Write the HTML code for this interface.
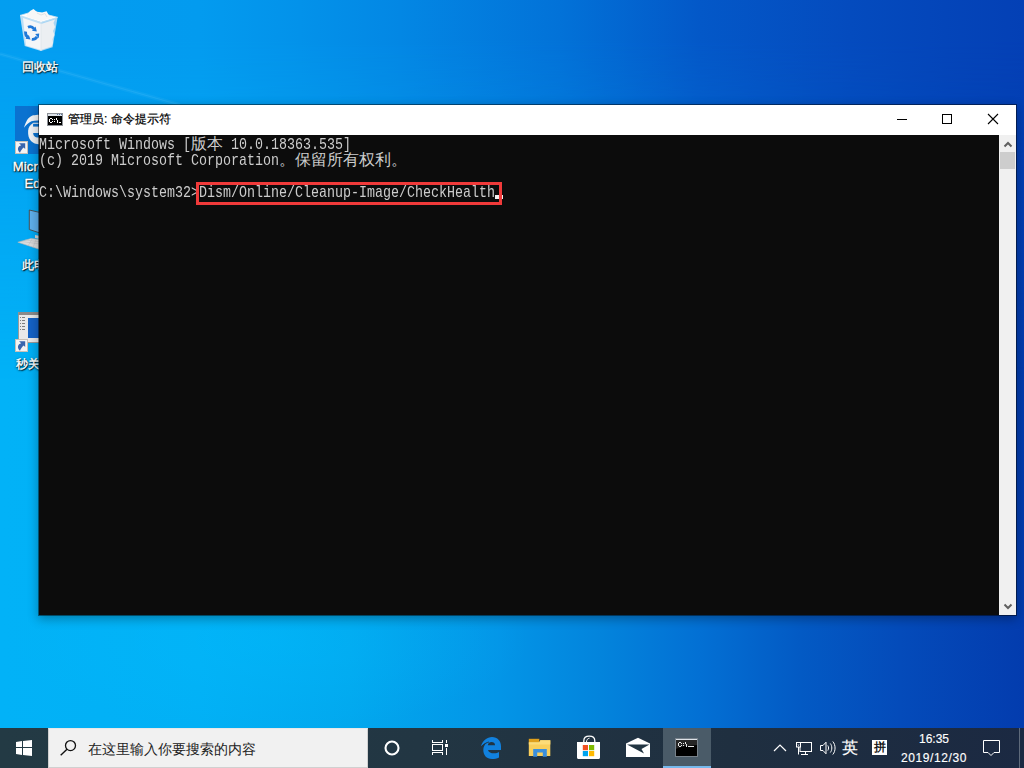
<!DOCTYPE html>
<html><head><meta charset="utf-8">
<style>
*{margin:0;padding:0;box-sizing:border-box}
html,body{width:1024px;height:768px;overflow:hidden}
body{position:relative;font-family:"Liberation Sans",sans-serif;background:#0a8fe2}
.abs{position:absolute}
svg{position:absolute;overflow:visible}
#wallB{left:0;top:0;width:1024px;height:768px;
 background:linear-gradient(90deg,#02b2f7 0px,#02b0f5 200px,#02a8ee 350px,#0395e7 500px,#0384dc 600px,#0370d4 700px,#035ac4 800px,#044bba 900px,#033cae 1024px);}
#wallT{left:0;top:0;width:1024px;height:768px;
 background:linear-gradient(90deg,#039ef0 0px,#039cf0 100px,#039bef 200px,#0392ea 300px,#0387e4 400px,#0272d8 560px,#0358c8 700px,#044bbe 850px,#0440b5 1024px);
 -webkit-mask-image:linear-gradient(180deg,#000 0px,#000 40px,rgba(0,0,0,0) 380px);}
.lbl{position:absolute;color:#fff;-webkit-text-stroke:.35px #fff;font-size:12px;line-height:16px;text-align:center;width:80px;left:0;
 text-shadow:1px 1px 1px rgba(0,0,0,.95),0 1px 2px rgba(0,0,0,.7),0 0 2px rgba(0,0,0,.5)}
#win{left:38px;top:104px;width:979px;height:512px;background:#fff;background-clip:padding-box;border:1px solid rgba(0,0,0,.45);box-shadow:0 3px 10px rgba(0,0,0,.3)}
#title{left:0;top:0;width:977px;height:30px;background:#fff}
#ttxt{left:29px;top:7px;font-size:12px;line-height:14px;color:#000;white-space:pre;-webkit-text-stroke:.2px #000}
#con{left:0;top:30px;width:960px;height:480px;background:#0c0c0c;overflow:hidden}
#sb{left:960px;top:30px;width:17px;height:480px;background:#f0f0f0}
.ln{position:absolute;left:0;margin-top:1px;height:16px;white-space:pre;color:#cccccc;line-height:16px}
.a{display:inline-block;height:16px;overflow:visible;vertical-align:top}
.a>i{display:inline-block;font-style:normal;font-family:"Liberation Mono",monospace;font-size:17px;line-height:16px;transform-origin:0 0;transform:scaleX(0.7843)}
.c{display:inline-block;height:16px;vertical-align:top;font-family:"Liberation Serif",serif;font-size:16px;line-height:16px;letter-spacing:0}
#task{left:0;top:728px;width:1024px;height:40px;background:linear-gradient(90deg,#233a44 0px,#223643 420px,#1f2f40 733px,#1b2942 1024px)}
#search{left:48px;top:0;width:320px;height:40px;background:#f1f1f1;border:1px solid #d0d0d0;border-top-color:#e8e8e8}
#stxt{left:39px;top:12px;font-size:14px;line-height:16px;color:#222;white-space:pre}
#act{left:663px;top:0;width:48px;height:40px;background:#4a5b68}
#actbar{left:663px;top:38px;width:48px;height:2px;background:#76b9ed}
.tray{position:absolute;color:#fff;white-space:pre;-webkit-text-stroke:.15px #fff}
</style></head><body>
<div id="wallB" class="abs"></div>
<div id="wallT" class="abs"></div>
<div class="abs" style="left:0;top:0;width:1024px;height:768px;background:radial-gradient(ellipse 260px 90px at 270px 640px,rgba(0,190,255,.35),rgba(0,190,255,0))"></div>

<svg style="left:0;top:0" width="300" height="110" viewBox="0 0 300 110"><path d="M0 54 L180 105" stroke="rgba(160,230,255,.07)" stroke-width="4"/><path d="M0 54 L180 105" stroke="rgba(170,235,255,.1)" stroke-width="1.2"/></svg>
<!-- desktop icons -->
<svg style="left:0;top:0" width="80" height="60" viewBox="0 0 80 60">
 <path d="M20 15.4 L41 22.3 L41 51 L24.7 46 Z" fill="#cfe6f6" opacity=".9"/>
 <path d="M41 22.3 L57.6 17.3 L52.6 47.3 L41 51 Z" fill="#b9dcf4" opacity=".9"/>
 <path d="M23 18 L41 24 L41 50 L26 45.5 Z" fill="#f4f6f8"/>
 <path d="M41 24 L55 19.5 L53.5 23 L55 27 L53 31 L54.5 35 L52.5 39 L53 43 L51.5 46.5 L41 50 Z" fill="#eceff2"/>
 <path d="M20 15.4 L34 11.3 L57.6 17.3 L41 22.3 Z" fill="#ffffff" stroke="#cfe3f2" stroke-width=".8"/>
 <path d="M26 16 L30 11 L33.5 9 L37 12 L42 12.5 L46.6 11.3 L49 15.5 L53 17.5 L41 21 L30 18 Z" fill="#f7f7f7"/>
 <path d="M37 13 L41 15 L45 13.5 L47 17" stroke="#dfe3e6" stroke-width="1" fill="none"/>
 <path d="M41 22.3 L41 51" stroke="#e0e6ea" stroke-width=".8"/>
 <g stroke="#1f78d8" stroke-width="2.8" stroke-linecap="butt" fill="none">
  <path d="M28 27.2 C30.5 26 32.5 26.8 34 28.8"/>
  <path d="M25.6 31.5 C25.2 34 26 36 27.8 37.5"/>
  <path d="M31.8 39.3 C34 39.6 35.8 38.8 37 36.8"/>
 </g>
 <g fill="#1f78d8"><path d="M32 30.8 L36.8 31.5 L35.6 26.6 Z"/><path d="M25.5 38.8 L30.5 39.5 L28.8 35 Z"/><path d="M35.2 34 L38.8 38.2 L39.2 33.6 Z"/></g>
</svg>
<div class="lbl" style="top:59px">回收站</div>

<div class="abs" style="left:15px;top:106px;width:30px;height:48px;background:#0a72d0"></div>
<svg style="left:15px;top:106px" width="30" height="48" viewBox="0 0 30 48">
 <path d="M9.1 21.7 C10.5 16 13 11.5 16.5 10 C19 9 21.5 8.8 30 8.8 L30 14.3 C25 14.3 20 14.5 16.5 15.3 C13.5 16.5 11 19 9.1 21.7 Z" fill="#f0f4f8"/>
 <path d="M18.4 16.8 C15 19 13.2 21.5 13.1 25 C13 29 13.5 32 16 35 C18.5 37.5 21 38.6 30 38.6 L30 16.8 Z" fill="#eef2f6"/>
 <path d="M18.1 17.8 L30 17.8 L30 20.6 L18.1 20.6 Z" fill="#0a72d0"/>
 <path d="M30 27.1 L18.1 27.1 C18.3 29.5 19.5 31.5 22 31.5 L30 31.5 Z" fill="#0a72d0"/>
</svg>
<div class="abs" style="left:15px;top:141px;width:13px;height:13px;background:#f4f4f4;border:1px solid #c8c0b8"></div>
<svg style="left:15px;top:141px" width="13" height="13" viewBox="0 0 13 13"><path d="M4 2.2 L10.2 2.2 L10.2 8 L8.6 6.6 C7.2 7.8 6 9.5 5 11.8 C3.4 10.4 2.7 8.8 3 7.2 C3.3 5.6 4.6 4.6 6.2 4.2 Z" fill="#3a66ae"/></svg>
<div class="lbl" style="top:158px;font-size:13px;line-height:17px;letter-spacing:.2px">Microsoft<br>Edge</div>

<svg style="left:0;top:200px" width="40" height="55" viewBox="0 0 40 55">
 <path d="M29.3 10 L40 12.5 L40 33 L29.3 29.5 Z" fill="#5fb0ec" stroke="#4a4a4a" stroke-width="0.9"/>
 <path d="M35 35 L40 36 L40 39 L35 38 Z" fill="#cfd4d8"/>
 <path d="M17.8 42.2 L31 38.5 L40 39.5 L40 49.5 Z" fill="#dcdcdc" stroke="#b0b4b8" stroke-width=".6"/>
 <g stroke="#b8bcc0" stroke-width=".5"><path d="M21 41.5 L40 44"/><path d="M25 40 L40 41.8"/><path d="M28 46 L32 39"/><path d="M33 47.5 L36 39.5"/></g>
</svg>
<div class="lbl" style="top:257px">此电脑</div>

<svg style="left:0;top:310px" width="40" height="45" viewBox="0 0 40 45">
 <rect x="18.5" y="2.5" width="22" height="30" fill="#e9e9e9" stroke="#9a9a9a"/>
 <rect x="18.5" y="2" width="22" height="3" fill="#8a8a8a"/>
 <rect x="28" y="8" width="12" height="20" fill="#1462c6"/>
 <g fill="#808080"><rect x="20" y="7" width="1" height="1"/><rect x="22" y="7" width="3" height="1"/><rect x="20" y="10" width="1" height="1"/><rect x="22" y="10" width="3" height="1"/><rect x="20" y="13" width="1" height="1"/><rect x="22" y="13" width="3" height="1"/><rect x="20" y="16" width="1" height="1"/><rect x="22" y="16" width="3" height="1"/><rect x="20" y="19" width="1" height="1"/><rect x="22" y="19" width="3" height="1"/></g>
</svg>
<div class="abs" style="left:15px;top:339px;width:13px;height:13px;background:#f4f4f4;border:1px solid #c8c0b8"></div>
<svg style="left:15px;top:339px" width="13" height="13" viewBox="0 0 13 13"><path d="M4 2.2 L10.2 2.2 L10.2 8 L8.6 6.6 C7.2 7.8 6 9.5 5 11.8 C3.4 10.4 2.7 8.8 3 7.2 C3.3 5.6 4.6 4.6 6.2 4.2 Z" fill="#3a66ae"/></svg>
<div class="lbl" style="top:356px">秒关程序</div>

<!-- cmd window -->
<div id="win" class="abs">
 <div id="title" class="abs">
  <svg style="left:8px;top:8px" width="16" height="13" viewBox="0 0 16 13" shape-rendering="crispEdges">
   <rect x="0" y="0" width="16" height="13" fill="#8e9298"/>
   <rect x="1" y="1" width="14" height="2" fill="#dde2e8"/>
   <rect x="10" y="1" width="1" height="1" fill="#5a76a0"/><rect x="12" y="1" width="1" height="1" fill="#5a76a0"/><rect x="14" y="1" width="1" height="1" fill="#5a76a0"/>
   <rect x="1" y="3" width="14" height="9" fill="#000"/>
   <g fill="#fff"><rect x="3" y="5" width="2" height="1"/><rect x="2" y="6" width="1" height="3"/><rect x="3" y="9" width="2" height="1"/><rect x="5" y="6" width="1" height="1"/><rect x="5" y="8" width="1" height="1"/>
   <rect x="7" y="6" width="1" height="1"/><rect x="7" y="8" width="1" height="1"/>
   <rect x="9" y="5" width="1" height="2"/><rect x="10" y="7" width="1" height="3"/>
   <rect x="12" y="9" width="2" height="1"/></g>
  </svg>
  <div id="ttxt" class="abs">管理员: 命令提示符</div>
  <div class="abs" style="left:858px;top:14px;width:10px;height:1px;background:#000"></div>
  <div class="abs" style="left:903px;top:9px;width:10px;height:10px;border:1px solid #000"></div>
  <svg style="left:949px;top:9px" width="10" height="10" viewBox="0 0 10 10"><path d="M0 0 L10 10 M10 0 L0 10" stroke="#000" stroke-width="1.1"/></svg>
 </div>
 <div id="con" class="abs">
  <div class="ln" style="top:0"><span class="a" style="width:152px"><i>Microsoft Windows [</i></span><span class="c" style="width:32px">版本</span><span class="a" style="width:128px"><i> 10.0.18363.535]</i></span></div>
  <div class="ln" style="top:16px"><span class="a" style="width:240px"><i>(c) 2019 Microsoft Corporation</i></span><span class="c" style="width:128px">。保留所有权利。</span></div>
  <div class="ln" style="top:48px"><span class="a" style="width:456px"><i>C:\Windows\system32&gt;Dism/Online/Cleanup-Image/CheckHealth</i></span></div>
  <div class="abs" style="left:456px;top:60px;width:8px;height:4px;background:#f0f0f0"></div>
  <div class="abs" style="left:157px;top:47px;width:306px;height:23px;border:3px solid #f03a3a"></div>
 </div>
 <div id="sb" class="abs">
  <svg style="left:5px;top:6px" width="8" height="6" viewBox="0 0 8 6"><path d="M0.5 5.5 L4 2 L7.5 5.5" stroke="#606060" stroke-width="2" fill="none"/></svg>
  <div class="abs" style="left:1px;top:17px;width:15px;height:17px;background:#cdcdcd"></div>
  <svg style="left:5px;top:469px" width="8" height="6" viewBox="0 0 8 6"><path d="M0.5 0.5 L4 4 L7.5 0.5" stroke="#606060" stroke-width="2" fill="none"/></svg>
 </div>
</div>

<!-- taskbar -->
<div id="task" class="abs">
 <svg style="left:16px;top:12px" width="16" height="16" viewBox="0 0 16 16">
  <path d="M0 1.9 L6 1 L6 7 L0 7 Z M7 0.9 L16 -0.1 L16 7 L7 7 Z M0 8 L6 8 L6 15 L0 14.1 Z M7 8 L16 8 L16 16.1 L7 15.1 Z" fill="#fff"/>
 </svg>
 <div id="search" class="abs">
  <svg style="left:11px;top:11px" width="17" height="17" viewBox="0 0 17 17"><circle cx="10.5" cy="5.6" r="5" stroke="#111" stroke-width="1.3" fill="none"/><path d="M7 9.2 L0.7 15.2" stroke="#111" stroke-width="1.4"/></svg>
  <div id="stxt" class="abs">在这里输入你要搜索的内容</div>
 </div>
 <svg style="left:384px;top:12px" width="16" height="16" viewBox="0 0 16 16"><circle cx="8" cy="8" r="6.5" stroke="#fff" stroke-width="2.1" fill="none"/></svg>
 <svg style="left:428px;top:8px" width="24" height="24" viewBox="0 0 24 24" shape-rendering="crispEdges">
  <g fill="#fff">
   <rect x="4" y="4" width="1" height="3"/><rect x="14" y="4" width="1" height="3"/><rect x="4" y="6" width="11" height="1"/>
   <rect x="4" y="8" width="11" height="1"/><rect x="4" y="14" width="11" height="1"/><rect x="4" y="8" width="1" height="7"/><rect x="14" y="8" width="1" height="7"/>
   <rect x="4" y="16" width="11" height="1"/><rect x="4" y="16" width="1" height="3"/><rect x="14" y="16" width="1" height="3"/>
   <rect x="18" y="4" width="1" height="3"/><rect x="17" y="8" width="3" height="3"/><rect x="18" y="12" width="1" height="7"/>
  </g>
 </svg>
 <svg style="left:476px;top:4px" width="32" height="32" viewBox="0 0 32 32">
  <path fill-rule="evenodd" d="M4.8 14.2 C7 8.5 11 5 16 5 C21.5 5 25 9 25 14 L25 18 L12 18 C12.5 20.5 15 21.3 18 21.3 C20 21.3 22 20.8 23 20 L23 25.5 C21 26.5 18.5 27 16 27 C10.5 27 7.3 23 7.3 18 C7.3 15 8.5 12.5 11 10.5 C8.5 11.5 6.5 13 4.8 14.2 Z M11.8 13.3 L19 13.3 C19 11 17.5 10 15.5 10 C13.5 10 12.3 11 11.8 13.3 Z" fill="#1181de"/>
  <path d="M6 14 C8 12 10.5 10.5 13 10" stroke="#223542" stroke-width="0.9" fill="none"/>
 </svg>
 <svg style="left:520px;top:2px" width="90" height="36" viewBox="0 0 90 36">
  <rect x="8.8" y="8.8" width="10.5" height="3.5" fill="#e0a01c"/>
  <path d="M8.8 12.2 H19.2 L20.4 10.2 H30.3 V26 H8.8 Z" fill="#f9cf5c"/>
  <path d="M8.8 12.2 H19.2 L20.4 10.2 H30.3 V14.5 H8.8 Z" fill="#fddc78"/>
  <path d="M13.2 26.8 V18.9 H26.8 V26.8 H22.8 V22.4 H17.2 V26.8 Z" fill="#3b8fdc"/>
  <path d="M63.8 12.5 V11 C63.8 8 66 6.2 69.3 6.2 C72.6 6.2 74.8 8 74.8 11 V12.5" stroke="#fff" stroke-width="1.3" fill="none"/>
  <path d="M66.5 12 C66.5 10 67.5 8.5 69.5 8.2" stroke="#fff" stroke-width="1" fill="none"/>
  <path d="M57 11.9 H80 V27.5 C80 28.4 79.4 29 78.5 29 H58.5 C57.6 29 57 28.4 57 27.5 Z" fill="#fff"/>
  <rect x="62.8" y="15" width="5.2" height="5.2" fill="#f25022"/><rect x="69" y="15" width="5.2" height="5.2" fill="#7fba00"/>
  <rect x="62.8" y="21" width="5.2" height="5.2" fill="#00a4ef"/><rect x="69" y="21" width="5.2" height="5.2" fill="#ffb900"/>
 </svg>
 <svg style="left:615px;top:0px" width="40" height="40" viewBox="0 0 40 40">
  <path d="M11 15.6 L23 9.8 L35 15.6 L35 29 L11 29 Z" fill="#fff"/>
  <path d="M12 16.5 L34.5 16.5 L26.5 21 L29 25.5 Z" fill="#223542"/>
 </svg>
 <div id="act" class="abs"></div>
 <div id="actbar" class="abs"></div>
 <svg style="left:675px;top:10px" width="23" height="19" viewBox="0 0 23 19" shape-rendering="crispEdges">
  <rect x="0" y="0" width="23" height="19" fill="#77818a"/>
  <rect x="1" y="1" width="21" height="1" fill="#dfe3e8"/>
  <rect x="1" y="2" width="21" height="16" fill="#000"/>
  <path d="M1 2 H22 V7 C15 7.5 6 8 1 11 Z" fill="#262626" shape-rendering="auto"/>
  <g fill="#e6e6e6"><rect x="4" y="4" width="2" height="1"/><rect x="3" y="5" width="1" height="3"/><rect x="4" y="8" width="2" height="1"/><rect x="6" y="5" width="1" height="1"/><rect x="6" y="7" width="1" height="1"/>
  <rect x="8" y="5" width="1" height="1"/><rect x="8" y="7" width="1" height="1"/>
  <rect x="10" y="4" width="1" height="2"/><rect x="11" y="6" width="1" height="3"/>
  <rect x="13" y="8" width="6" height="1"/></g>
 </svg>
 <svg style="left:773px;top:16px" width="14" height="8" viewBox="0 0 14 8"><path d="M1 7 L7 1 L13 7" stroke="#fff" stroke-width="1.2" fill="none"/></svg>
 <svg style="left:790px;top:8px" width="50" height="24" viewBox="0 0 50 24">
  <g stroke="#fff" stroke-width="1" fill="none">
   <rect x="10" y="6.5" width="11.5" height="9"/>
   <rect x="6.5" y="6.5" width="4" height="4.5" fill="#1e2d42"/>
   <path d="M8.5 11 V18.5 M15.5 15.5 V18 M11 18.5 H18"/>
   <path d="M8 8.5 L8.5 9.5 L9 8.5" stroke-width=".8"/>
   <path d="M30.5 9.5 H33 L36 6.2 V17.8 L33 14.5 H30.5 Z"/>
   <path d="M37.8 9.5 C38.8 11 38.8 13 37.8 14.5"/>
   <path d="M40.3 7.5 C42.3 10 42.3 14 40.3 16.5"/>
   <path d="M42.8 5.5 C45.8 9 45.8 15 42.8 18.5"/>
  </g>
 </svg>
 <div class="tray" style="left:842px;top:11px;font-size:16px;line-height:18px;-webkit-text-stroke:.2px #fff">英</div>
 <div class="abs" style="left:872px;top:12px;width:15px;height:15px;background:#fff"></div>
 <div class="abs" style="left:872px;top:12px;width:15px;height:15px;color:#000;font-size:12px;line-height:15px;text-align:center;-webkit-text-stroke:.3px #000">拼</div>
 <div class="tray" style="left:900px;top:3px;width:68px;text-align:center;font-size:12px;line-height:16px">16:35</div><div class="tray" style="left:898px;top:22px;width:72px;text-align:center;font-size:12px;line-height:16px;letter-spacing:0.6px">2019/12/30</div>
 <svg style="left:983px;top:12px" width="17" height="16" viewBox="0 0 17 16">
  <path d="M0.5 0.5 H16.5 V12.5 H11 L8 15.5 L5 12.5 H0.5 Z" stroke="#fff" stroke-width="1" fill="none"/>
 </svg>
 <div class="abs" style="left:1019px;top:0;width:1px;height:40px;background:#5e6a7a"></div>
</div>
</body></html>
